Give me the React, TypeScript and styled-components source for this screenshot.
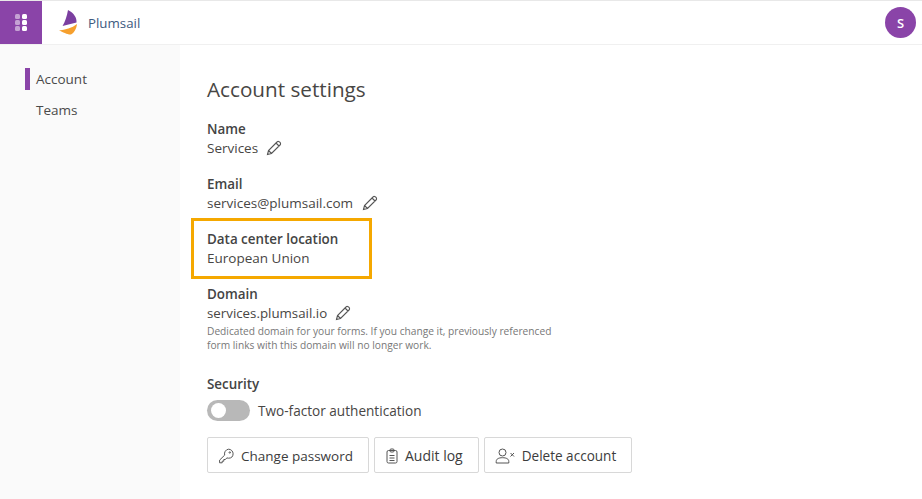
import React from "react";
import styled, { createGlobalStyle } from "styled-components";

const Global = createGlobalStyle`
  html, body { margin: 0; padding: 0; background: #fff; }
  body { font-family: "Open Sans", "Noto Sans", sans-serif; color: #323130; }
`;
const Page = styled.div`
  width: 922px; height: 499px; display: flex; flex-direction: column; overflow: hidden;
`;
const TopBar = styled.header`
  height: 45px; flex: none; display: flex; align-items: center; border-top: 1px solid #e8e8e8;
  border-bottom: 1px solid #f0f0f0; box-sizing: border-box; padding-right: 6px;
`;
const Launcher = styled.div`
  width: 42px; height: 43px; background: #8a44a8; display: flex; align-items: center; justify-content: center;
`;
const Brand = styled.div`
  display: flex; align-items: center; gap: 11px; margin-left: 17px; flex: 1;
  font-size: 13.3px; color: #3d5a80;
`;
const Avatar = styled.div`
  width: 31px; height: 31px; border-radius: 50%; background: #8a44a8; color: #fff;
  display: flex; align-items: center; justify-content: center; font-size: 13px; font-weight: 600;
`;
const Body = styled.div`display: flex; flex: 1;`;
const Side = styled.nav`
  width: 180px; background: #fafafa; padding-top: 23px; box-sizing: border-box;
  display: flex; flex-direction: column; gap: 9px;
`;
const NavItem = styled.div<{ $active?: boolean }>`
  margin-left: 25px; padding-left: 6px; height: 22px; line-height: 22px; font-size: 13.5px; color: #4a4a4a;
  border-left: 5px solid ${(p) => (p.$active ? "#8a44a8" : "transparent")};
`;
const Main = styled.main`padding: 29px 0 0 27px; flex: 1;`;
const Title = styled.h1`
  margin: 0 0 16px; font-size: 20.7px; line-height: 30px; font-weight: 400; color: #484644;
`;
const Field = styled.section`
  height: 55px; box-sizing: border-box;
`;
const Label = styled.div`font-size: 13.4px; line-height: 18px; font-weight: 600; color: #444;`;
const Value = styled.div<{ $size?: number; $gap?: number }>`
  font-size: ${(p) => p.$size ?? 13.5}px; line-height: 20px; color: #484644; display: flex; align-items: center;
  gap: ${(p) => p.$gap ?? 9}px;
`;
const Highlight = styled.div`
  position: absolute; left: 191px; top: 218px; width: 181px; height: 61px; box-sizing: border-box;
  border: 3px solid #f5a800;
`;
const Hint = styled.p`
  margin: 1px 0 0; font-size: 10.2px; line-height: 14px; color: #777; width: 360px;
`;
const SecurityBlock = styled.section`margin-top: 23px;`;
const ToggleRow = styled.div`display: flex; align-items: center; gap: 8px; margin-top: 6px; font-size: 13.6px; color: #484644; height: 22px;`;
const Toggle = styled.div`
  width: 43px; height: 21px; border-radius: 11px; background: #b8b8b8; position: relative;
  &::after { content: ""; position: absolute; left: 4px; top: 3px; width: 15px; height: 15px; border-radius: 50%; background: #fff; }
`;
const Buttons = styled.div`display: flex; gap: 5px; margin-top: 16px;`;
const Button = styled.button<{ $size?: number }>`
  height: 36px; display: flex; align-items: center; gap: 6px; padding: 1px 15px 0 10px; background: #fff;
  border: 1px solid #d8d8d8; border-radius: 2px; font: inherit; font-size: ${(p) => p.$size ?? 13.5}px; color: #3c3c3c;
`;
const Pencil = () => (
  <svg width="16" height="16" viewBox="0 0 16 16" fill="none" stroke="#555" strokeWidth="1.1">
    <path d="M1.5 14.5l1-4L11 2a1.8 1.8 0 0 1 2.8 0.2l.2.2A1.8 1.8 0 0 1 14 5l-8.5 8.5zM2.5 10.5l3 3M10 3l3 3" />
  </svg>
);
const Grid = () => (
  <svg width="12" height="17" viewBox="0 0 12 17">
    {[0, 1, 2].map((r) => [0, 1].map((c) => (
      <rect key={`${r}${c}`} x={c * 7} y={r * 6} width="5" height="5" rx="1.5" fill="#fff" opacity={c === 1 ? 1 : 0.5} />
    )))}
  </svg>
);
const Logo = () => (
  <svg width="18" height="25" viewBox="0 0 18 25">
    <path d="M9 0C8 6 6 12 3.5 16L17.5 12.5C18 8 15 3 9 0Z" fill="#7b3fa0" />
    <path d="M0 20.5C6 20 13 18 18 14C17.5 19 15 23 12 24.5C9 25 4 22 0 20.5Z" fill="#f6a02e" />
  </svg>
);
const Key = () => (
  <svg width="17" height="16" viewBox="0 0 17 16" fill="none" stroke="#555" strokeWidth="1">
    <path d="M10.5 1.2a4.6 4.6 0 0 1 4.6 4.6 4.6 4.6 0 0 1-4.6 4.4c-.6 0-1.2-.1-1.7-.3L7.4 11.5H5.8v1.7H4.2v1.6H1.6v-2.7l5.1-5a4.6 4.6 0 0 1 3.8-5.9z" /><circle cx="11.8" cy="4.5" r=".7" />
  </svg>
);
const Clip = () => (
  <svg width="14" height="16" viewBox="0 0 14 16" fill="none" stroke="#555" strokeWidth="1">
    <rect x="2" y="2.5" width="10" height="12.5" rx="1.5" /><rect x="5" y="1" width="4" height="3" rx="1" />
    <path d="M4.5 7.5h5M4.5 10h5M4.5 12.5h5" />
  </svg>
);
const UserX = () => (
  <svg width="21" height="16" viewBox="0 0 20 16" fill="none" stroke="#555" strokeWidth="1">
    <circle cx="7" cy="4.5" r="3.5" /><path d="M.7 15v-1.5C.7 11 3 9.7 7 9.7s6.3 1.3 6.3 3.8V15z" /><path d="M15 5l3.5 3.5M18.5 5L15 8.5" />
  </svg>
);
export default function App() {
  return (
    <Page>
      <Global />
      <TopBar>
        <Launcher><Grid /></Launcher>
        <Brand><Logo />Plumsail</Brand>
        <Avatar>S</Avatar>
      </TopBar>
      <Body>
        <Side>
          <NavItem $active>Account</NavItem>
          <NavItem>Teams</NavItem>
        </Side>
        <Main>
          <Title>Account settings</Title>
          <Field><Label>Name</Label><Value $gap={8}>Services <Pencil /></Value></Field>
          <Field><Label>Email</Label><Value>services@plumsail.com <Pencil /></Value></Field>
          <Field><Label>Data center location</Label><Value>European Union</Value></Field>
          <Highlight />
          <section>
            <Label>Domain</Label>
            <Value $size={13.3} $gap={8}>services.plumsail.io <Pencil /></Value>
            <Hint>Dedicated domain for your forms. If you change it, previously referenced form links with this domain will no longer work.</Hint>
          </section>
          <SecurityBlock>
            <Label>Security</Label>
            <ToggleRow><Toggle />Two-factor authentication</ToggleRow>
          </SecurityBlock>
          <Buttons>
            <Button><Key />Change password</Button>
            <Button $size={14}><Clip />Audit log</Button>
            <Button $size={13.55}><UserX />Delete account</Button>
          </Buttons>
        </Main>
      </Body>
    </Page>
  );
}
